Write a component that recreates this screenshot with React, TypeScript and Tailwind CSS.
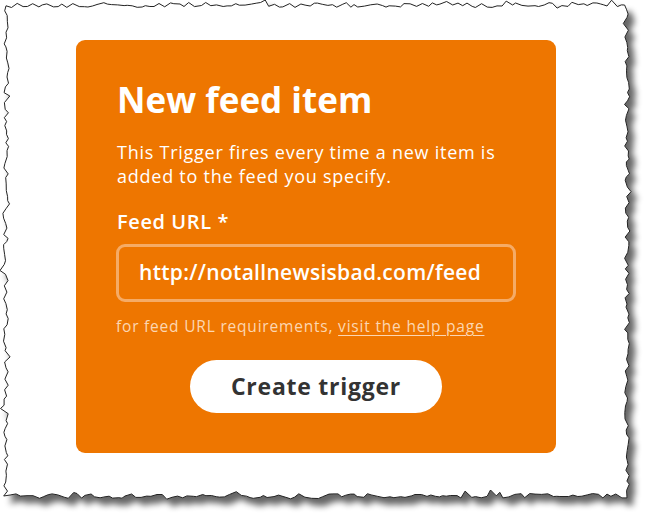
import React from "react";

function makeTornPath(): string {
  let seed = 12345;
  const rnd = () => {
    seed = (seed * 1103515245 + 12345) % 2147483648;
    return seed / 2147483648;
  };
  const L = 6, T = 5, R = 627, B = 496;
  const pts: [number, number][] = [];
  const jit = (a: number) => (rnd() - 0.5) * a + (rnd() < 0.15 ? (rnd() - 0.5) * a * 1.6 : 0);
  for (let x = L; x < R; x += 3 + rnd() * 4) pts.push([x, T + jit(5)]);
  for (let y = T; y < B; y += 3 + rnd() * 4) pts.push([R + jit(5), y]);
  for (let x = R; x > L; x -= 3 + rnd() * 4) pts.push([x, B + jit(5)]);
  for (let y = B; y > T; y -= 3 + rnd() * 4) pts.push([L + jit(5), y]);
  return "M" + pts.map((p) => `${p[0].toFixed(1)},${p[1].toFixed(1)}`).join(" L") + " Z";
}

const tornPath = makeTornPath();

export default function App() {
  const font = { fontFamily: "'Open Sans', Lato, sans-serif" };
  return (
    <div className="relative w-[647px] h-[517px] bg-white overflow-hidden" style={font}>
      <svg className="absolute inset-0" width="647" height="517" viewBox="0 0 647 517">
        <defs>
          <filter id="sh" x="-5%" y="-5%" width="115%" height="115%">
            <feGaussianBlur in="SourceAlpha" stdDeviation="3" />
            <feOffset dx="6" dy="7" result="b" />
            <feComponentTransfer>
              <feFuncA type="linear" slope="0.6" />
            </feComponentTransfer>
            <feMerge>
              <feMergeNode />
              <feMergeNode in="SourceGraphic" />
            </feMerge>
          </filter>
        </defs>
        <path d={tornPath} fill="#ffffff" stroke="#222" strokeWidth="1" filter="url(#sh)" />
      </svg>
      <div className="relative pl-[76px] pt-[40px]">
        <div className="w-[480px] h-[413px] rounded-[9px] bg-[#ee7600] pl-[41px] pr-[40px] pt-[38px] flex flex-col">
          <h1 className="text-[35px] leading-[44px] font-bold text-white whitespace-nowrap">New feed item</h1>
          <p className="mt-[18px] text-[18px] leading-[24px] tracking-[0.75px] text-white whitespace-nowrap">
            This Trigger fires every time a new item is<br />added to the feed you specify.
          </p>
          <div className="mt-[22px] text-[20px] leading-[24px] tracking-[0.6px] font-semibold text-white">Feed URL *</div>
          <div className="mt-[10px] ml-[-1px] w-[400px] h-[58px] rounded-[9px] border-[3px] border-[#f5ab66] flex items-center pl-[20px]">
            <span className="text-[21px] tracking-[0.3px] font-semibold text-white whitespace-nowrap">http://notallnewsisbad.com/feed</span>
          </div>
          <div className="mt-[14px] ml-[-1px] text-[15.5px] leading-[20px] tracking-[0.8px] text-[#fcd6b2] whitespace-nowrap">
            for feed URL requirements, <span className="underline underline-offset-[3px]">visit the help page</span>
          </div>
          <div className="mt-[24px] flex justify-center pr-[1px]">
            <button className="w-[252px] h-[53px] rounded-full bg-white text-[23px] tracking-[0.75px] font-bold text-[#333333]">
              Create trigger
            </button>
          </div>
        </div>
      </div>
    </div>
  );
}
